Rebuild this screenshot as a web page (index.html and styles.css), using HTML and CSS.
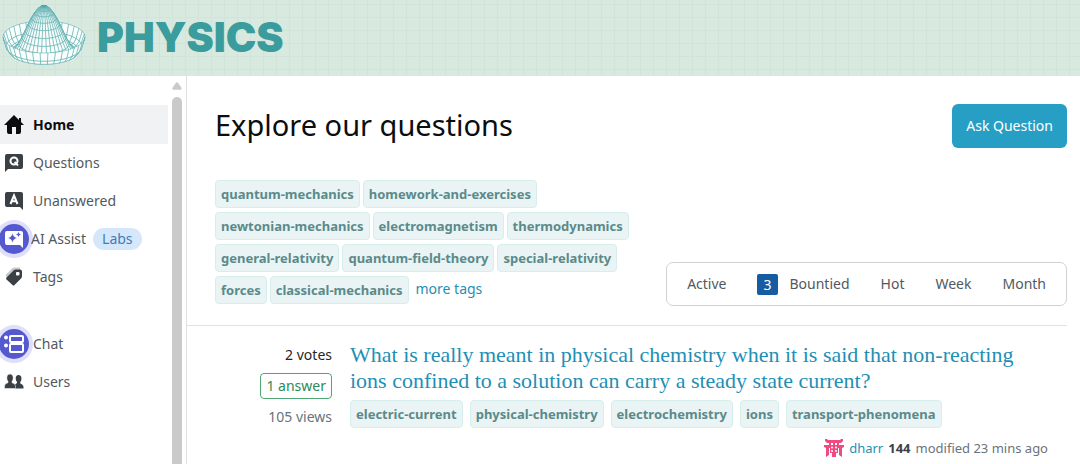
FILE: index.html
```html
<!DOCTYPE html>
<html lang="en">
<head>
<meta charset="utf-8">
<title>Physics - Explore our questions</title>
<link rel="stylesheet" href="styles.css">
</head>
<body>
<header class="site-header">
  <a class="brand" href="#">
    <svg class="brand-mark" id="hat" viewBox="0 0 90 76" aria-hidden="true"></svg>
    <span class="brand-name">PHYSICS</span>
  </a>
</header>
<div class="layout">
  <div class="sidebar">
    <nav class="nav">
      <a class="nav-item nav-item-active" href="#">
        <svg class="icon" viewBox="0 0 20 20"><path fill="#0c0d0e" d="M10 0 0 10h3v7q0 2 2 2h3v-7h4v7h3q2 0 2-2v-7h3l-3-3V3h-2v2z"/></svg>
        <span>Home</span></a>
      <a class="nav-item" href="#">
        <svg class="icon" viewBox="0 0 20 20"><path fill="#3b4045" d="M3 1h14q2 0 2 2v11q0 2-2 2H4l-3 3V3q0-2 2-2z"/><circle cx="10" cy="8" r="3.5" fill="none" stroke="#fff" stroke-width="2"/><path d="m10.500 9 3.500 3.500" stroke="#fff" stroke-width="1.800"/></svg>
        <span>Questions</span></a>
      <a class="nav-item" href="#">
        <svg class="icon" viewBox="0 0 20 20"><path fill="#3b4045" d="M3 1h14q2 0 2 2v16l-3-3H3q-2 0-2-2V3q0-2 2-2z"/><path d="M6.500 13 10 4.500l3.500 8.500M8 10.200h4" fill="none" stroke="#fff" stroke-width="2"/></svg>
        <span>Unanswered</span></a>
      <a class="nav-item nav-item-tight" href="#">
        <span class="halo"><svg class="icon" viewBox="0 0 20 20"><path fill="#fff" d="M3 2h14q2 0 2 2v15l-3-3H3q-2 0-2-2V4q0-2 2-2z"/><path fill="#5459cf" d="M8.500 4.500q.8 3.700 4.500 4.500-3.700.8-4.500 4.500Q7.700 9.800 4 9q3.700-.8 4.500-4.500zM14.500 3q.4 2.100 2.500 2.500-2.100.4-2.500 2.500-.4-2.100-2.500-2.500 2.100-.4 2.500-2.500z"/></svg></span>
        <span>AI Assist</span><span class="labs">Labs</span></a>
      <a class="nav-item" href="#">
        <svg class="icon" viewBox="0 0 20 20"><path fill="#c8cbce" d="M1.500 8 8 1.500q1-1 3-1h5v3L4 13z"/><path fill="#3b4045" d="M11.500 2.500H16q2 0 2 2V9q0 1.500-1 2.500L10.500 18q-1 1-2 0L2.500 12.500q-1-1 0-2L9.500 3.500q1-1 2-1z"/><rect x="12" y="5" width="3.500" height="3.500" rx="1" fill="#fff"/></svg>
        <span>Tags</span></a>
      <a class="nav-item nav-item-break" href="#">
        <span class="halo"><svg class="icon" viewBox="0 0 20 20"><g fill="none" stroke="#fff" stroke-width="2"><rect x="6" y="2" width="13" height="6" rx="1"/><rect x="6" y="10" width="13" height="8" rx="1"/></g><circle cx="2" cy="3.500" r="2" fill="#fff"/><circle cx="2" cy="11.500" r="2" fill="#fff"/></svg></span>
        <span>Chat</span></a>
      <a class="nav-item" href="#">
        <svg class="icon" viewBox="0 0 20 20"><g fill="#3b4045"><path d="M14.500 3q3 0 3 3.500 0 2-1.200 3.500v1.500q3.200 1.200 3.200 3.500v1.500H11v-4l2-1.500V10q-1.300-1.500-1.300-3.500 0-3.500 2.800-3.500z"/><path stroke="#fff" stroke-width=".5" d="M6 2q3.200 0 3.200 3.700 0 2.300-1.200 3.600v1.400q3.500 1.100 3.500 3.300v2.500H.5V14q0-2.200 3.500-3.300V9.300Q2.800 8 2.800 5.700 2.800 2 6 2z"/></g></svg>
        <span>Users</span></a>
    </nav>
    <div class="scrollbar" aria-hidden="true">
      <svg class="scroll-arrow" viewBox="0 0 12 9"><path fill="#cacaca" d="M6 0q1 0 1.500 1L11.500 7q.5 2-1 2h-9q-1.500 0-1-2L4.500 1Q5 0 6 0z"/></svg>
      <div class="scroll-thumb"></div>
    </div>
  </div>
  <main class="main">
    <div class="title-row">
      <h1>Explore our questions</h1>
      <button class="ask" type="button">Ask Question</button>
    </div>
    <div class="filter-row">
      <div class="tags">
        <a class="tag" href="#">quantum-mechanics</a>
        <a class="tag" href="#">homework-and-exercises</a>
        <a class="tag" href="#">newtonian-mechanics</a>
        <a class="tag" href="#">electromagnetism</a>
        <a class="tag" href="#">thermodynamics</a>
        <a class="tag" href="#">general-relativity</a>
        <a class="tag" href="#">quantum-field-theory</a>
        <a class="tag" href="#">special-relativity</a>
        <a class="tag" href="#">forces</a>
        <a class="tag" href="#">classical-mechanics</a>
        <a class="more" href="#">more tags</a>
      </div>
      <div class="filters">
        <button type="button">Active</button>
        <button type="button"><span class="count">3</span>Bountied</button>
        <button type="button">Hot</button>
        <button type="button">Week</button>
        <button type="button">Month</button>
      </div>
    </div>
    <article class="question">
      <div class="stats">
        <span class="votes">2 votes</span>
        <span class="answers">1 answer</span>
        <span class="views">105 views</span>
      </div>
      <div class="summary">
        <h2><a href="#">What is really meant in physical chemistry when it is said that non-reacting ions confined to a solution can carry a steady state current?</a></h2>
        <div class="tags question-tags">
          <a class="tag" href="#">electric-current</a>
          <a class="tag" href="#">physical-chemistry</a>
          <a class="tag" href="#">electrochemistry</a>
          <a class="tag" href="#">ions</a>
          <a class="tag" href="#">transport-phenomena</a>
        </div>
        <div class="author">
          <svg class="avatar" viewBox="0 0 20 20" aria-hidden="true"><g fill="#ef4b81"><path d="M1 1h2l1 1h12l1-1h2v2l-2 2H3L1 3zM5 5h2v3H5zM13 5h2v3h-2zM9 5h2v3H9zM0 7h20v2l-2 1H2L0 9zM2 10h3v7l-3 2zM15 10h3v9l-3-2zM6 9h8v6H6zM8 15h4v4H8z"/></g><g fill="#fff"><circle cx="8" cy="9.500" r="1"/><circle cx="12" cy="9.500" r="1"/><circle cx="8" cy="13" r="1"/><circle cx="12" cy="13" r="1"/></g></svg>
          <a href="#">dharr</a><strong>144</strong><span>modified 23 mins ago</span>
        </div>
      </div>
    </article>
  </main>
</div>
<script src="hat.js"></script>
</body>
</html>
```
FILE: hat.js
```js
// Wireframe of z(r) = h - b r^2 + c r^4, painted from back to front.
const svg = document.getElementById("hat");
const rings = 13, spokes = 34;
const point = (r, t) => {
  const z = 31 - 142 * r * r + 111 * r ** 4;
  return [44 + 41 * r * Math.cos(t), 37 + 16 * r * Math.sin(t) - z];
};
const faces = [];
for (let i = 0; i < rings; i++) {
  for (let j = 0; j < spokes; j++) {
    const r0 = i / rings, r1 = (i + 1) / rings;
    const t0 = j / spokes * 2 * Math.PI, t1 = (j + 1) / spokes * 2 * Math.PI;
    faces.push({
      depth: (r0 + r1) * Math.sin((t0 + t1) / 2),
      points: [point(r0, t0), point(r1, t0), point(r1, t1), point(r0, t1)]
    });
  }
}
faces.sort((a, b) => a.depth - b.depth);
for (const face of faces) {
  const el = document.createElementNS("http://www.w3.org/2000/svg", "polygon");
  el.setAttribute("points", face.points.map(p => p.map(v => v.toFixed(2)).join()).join(" "));
  svg.append(el);
}
```
FILE: styles.css
```css
* { box-sizing: border-box; }
body {
  margin: 0;
  min-height: 100vh;
  display: flex;
  flex-direction: column;
  background: #fff;
  color: #525960;
  font: 14px/20px "Noto Sans", "Open Sans", sans-serif;
}
a { color: #1e8fb5; text-decoration: none; }
button { font: inherit; color: inherit; border: 0; background: none; }
h1, h2 { margin: 0; font-weight: 400; }

.site-header {
  background-color: #d8eadf;
  background-image:
    linear-gradient(90deg, #d1e4d9 1px, transparent 1px),
    linear-gradient(#d1e4d9 1px, transparent 1px);
  background-size: 13px 13px;
  background-position: 3px 4px;
}
.brand { display: inline-flex; align-items: center; gap: 7px; vertical-align: top; }
.brand-mark { width: 90px; height: 76px; }
.brand-mark polygon { fill: #fafffd; stroke: #4aa5a6; stroke-width: .5; }
.brand-name { color: #3b9c9e; font: 900 41px/74px Inter, sans-serif; height: 76px; }

.layout { display: flex; flex: 1; }
.sidebar { display: flex; flex: none; width: 187px; border-right: 1px solid #dfe1e3; }
.nav { flex: 1; padding-top: 29px; }
.nav-item { display: flex; align-items: center; gap: 9px; height: 38px; padding-left: 4px; color: #525960; }
.nav-item-tight { gap: 7px; }
.nav-item-active { height: 39px; background: #f1f2f3; color: #0c0d0e; font-weight: 700; }
.nav-item-break { margin-top: 29px; }
.icon { width: 20px; height: 20px; flex: none; }
.halo {
  display: flex;
  flex: none;
  margin: 0 -9px;
  padding: 5px;
  border: 4px solid #dfdffb;
  border-radius: 50%;
  background: #5459cf;
}
.labs { padding: 0 9px; border-radius: 11px; background: #d5e7fa; color: #3d7db5; line-height: 22px; }
.scrollbar { width: 18px; padding: 6px 4px 0; display: flex; flex-direction: column; gap: 7px; }
.scroll-arrow { width: 10px; height: 8px; }
.scroll-thumb { flex: 1; border-radius: 5px 5px 0 0; background: #cacaca; }

.main { flex: 1; padding: 28px 13px 0 0; }
.title-row { display: flex; justify-content: space-between; align-items: flex-start; padding-left: 28px; }
h1 { color: #0c0d0e; font-size: 29px; line-height: 42px; }
.ask { padding: 0 14px; line-height: 44px; border-radius: 6px; background: #279fc4; color: #fff; }
.filter-row {
  display: flex;
  justify-content: space-between;
  align-items: flex-end;
  padding: 32px 0 19px 28px;
  border-bottom: 1px solid #dfe1e3;
}
.tags { display: flex; flex-wrap: wrap; gap: 4px 3px; }
.filter-row .tags { width: 424px; padding-bottom: 2px; }
.tag {
  padding: 0 5px;
  border: 1px solid #d6eeec;
  border-radius: 4px;
  background: #eaf4f5;
  color: #5b8a8a;
  font-size: 13px;
  font-weight: 700;
  line-height: 26px;
}
.more { padding-left: 4px; line-height: 26px; }
.filters { display: flex; gap: 31px; padding: 0 20px; border: 1px solid #cfd2d5; border-radius: 7px; }
.filters button { display: flex; align-items: center; gap: 12px; padding: 0; line-height: 42px; }
.count { padding: 0 6px; border-radius: 2px; background: #155ca2; color: #fff; line-height: 21px; }

.question { display: flex; gap: 18px; padding: 16px 19px 0 28px; }
.stats { display: flex; flex-direction: column; align-items: flex-end; gap: 8px; width: 117px; padding-top: 3px; flex: none; }
.votes { color: #232629; }
.answers { padding: 0 5px; border: 1px solid #4fa675; border-radius: 4px; color: #2f8a57; line-height: 24px; }
.views { color: #6a737c; }
.summary { flex: 1; }
h2 { font: 22px/26px "Liberation Serif", serif; }
.question-tags { gap: 7px; padding-top: 6px; }
.author { display: flex; justify-content: flex-end; align-items: center; gap: 5px; padding-top: 10px; color: #6a737c; font-size: 13px; }
.author strong { color: #3b4045; }
.avatar { width: 20px; height: 20px; }
```
